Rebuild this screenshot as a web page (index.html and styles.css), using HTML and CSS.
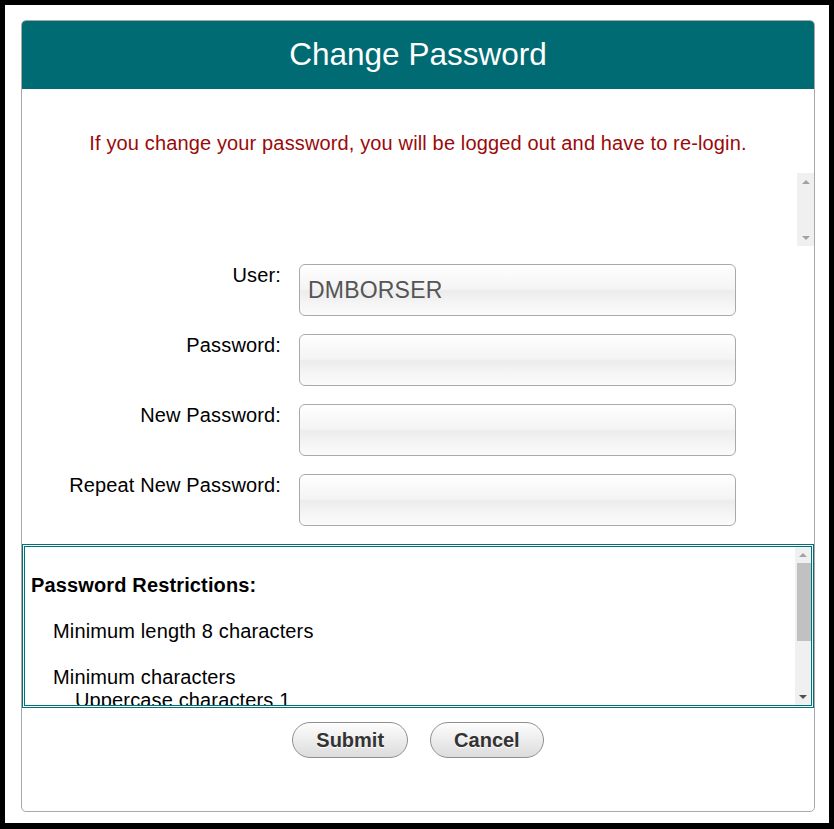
FILE: index.html
```html
<!DOCTYPE html>
<html lang="en">
<head>
<meta charset="utf-8">
<title>Change Password</title>
<link rel="stylesheet" href="styles.css">
</head>
<body>
<div class="frame">
  <div class="dialog">
    <div class="dlg-header"><h1 class="dlg-title">Change Password</h1></div>
    <p class="notice">If you change your password, you will be logged out and have to re-login.</p>
    <div class="msgbox">
      <div class="msgbox-content"></div>
      <div class="vscroll">
        <span class="arrow up"></span>
        <span class="track"></span>
        <span class="arrow down"></span>
      </div>
    </div>
    <form class="pw-form">
      <label class="lbl" for="f-user">User:</label>
      <input class="field" id="f-user" type="text" value="DMBORSER" readonly>
      <label class="lbl" for="f-pw">Password:</label>
      <input class="field" id="f-pw" type="password">
      <label class="lbl" for="f-new">New Password:</label>
      <input class="field" id="f-new" type="password">
      <label class="lbl" for="f-rep">Repeat New Password:</label>
      <input class="field" id="f-rep" type="password">
    </form>
    <div class="restrict">
      <div class="restrict-content">
        <p class="restrict-title">Password Restrictions:</p>
        <p class="restrict-item">Minimum length 8 characters</p>
        <div class="restrict-item">Minimum characters
          <div class="restrict-sub">Uppercase characters 1</div>
        </div>
      </div>
      <div class="vscroll slim">
        <span class="arrow up short"></span>
        <span class="thumb"></span>
        <span class="track"></span>
        <span class="arrow down dark"></span>
      </div>
    </div>
    <div class="actions">
      <button class="btn" type="button">Submit</button>
      <button class="btn" type="button">Cancel</button>
    </div>
  </div>
</div>
</body>
</html>
```

FILE: styles.css
```css
html, body {
  margin: 0;
  background: #000;
}
body {
  padding: 5px 5px 6px;
  font-family: "Liberation Sans", Arial, sans-serif;
  font-size: 20px;
  letter-spacing: 0.14px;
  color: #000;
}
.frame {
  background: #fff;
  width: 824px;
  height: 818px;
  padding: 15px 0 0 16px;
  box-sizing: border-box;
}
.dialog {
  width: 794px;
  height: 792px;
  box-sizing: border-box;
  border: 1px solid #a9a9a9;
  border-radius: 5px;
  display: flex;
  flex-direction: column;
}
.dlg-header {
  height: 68px;
  box-sizing: border-box;
  padding-bottom: 2px;
  background: #016b74;
  border-radius: 4px 4px 0 0;
  display: flex;
  align-items: center;
  justify-content: center;
}
.dlg-title {
  margin: 0;
  font-size: 31.5px;
  font-weight: normal;
  letter-spacing: 0;
  line-height: 37px;
  color: #fff;
}
.notice {
  margin: 43px 0 18px;
  text-align: center;
  color: #9a0a0a;
  line-height: 23px;
}
.msgbox {
  height: 73px;
  display: flex;
  margin-bottom: 18px;
}
.msgbox-content {
  flex: 1;
}
.vscroll {
  width: 17px;
  background: #f0f0f0;
  display: flex;
  flex-direction: column;
}
.vscroll.slim {
  width: 16px;
}
.arrow {
  height: 17px;
  display: flex;
  align-items: center;
  justify-content: center;
  flex: none;
}
.arrow.short {
  height: 16px;
}
.arrow::before {
  content: "";
  width: 0;
  height: 0;
  border-left: 4px solid transparent;
  border-right: 4px solid transparent;
}
.arrow.up::before {
  border-bottom: 4px solid #a3a3a3;
}
.arrow.down::before {
  border-top: 4px solid #a3a3a3;
}
.arrow.down.dark::before {
  border-top-color: #505050;
}
.track {
  flex: 1;
}
.thumb {
  flex: none;
  height: 78px;
  margin-left: 2px;
  background: #c1c1c1;
}
.pw-form {
  display: grid;
  grid-template-columns: 259px 437px;
  column-gap: 18px;
  row-gap: 18px;
  margin: 0 0 18px;
}
.lbl {
  text-align: right;
  line-height: 23px;
}
.field {
  width: 437px;
  height: 52px;
  box-sizing: border-box;
  margin: 0;
  padding: 0 8px;
  border: 1px solid #a9a9a9;
  border-radius: 6px;
  background: linear-gradient(#ffffff 0%, #f4f4f4 48%, #ececec 52%, #f6f6f6 80%, #fbfbfb 100%);
  font-family: "Liberation Sans", Arial, sans-serif;
  font-size: 23px;
  letter-spacing: 0.2px;
  color: #555;
  outline: none;
}
.restrict {
  height: 164px;
  box-sizing: border-box;
  border: 3px double #00717a;
  display: flex;
  margin-bottom: 14px;
}
.restrict-content {
  flex: 1;
  overflow: hidden;
  padding: 27px 0 0 6px;
}
.restrict-title {
  margin: 0 0 23px;
  font-weight: bold;
  line-height: 23px;
}
.restrict-item {
  margin: 0 0 23px 22px;
  line-height: 23px;
}
.restrict-sub {
  margin-left: 22px;
}
.actions {
  display: flex;
  justify-content: center;
  gap: 22px;
}
.btn {
  height: 36px;
  padding: 0 23px;
  border: 1px solid #8f8f8f;
  border-radius: 18px;
  background: linear-gradient(#fdfdfd, #dcdcdc);
  font-family: "Liberation Sans", Arial, sans-serif;
  font-size: 20px;
  font-weight: bold;
  color: #333;
  text-shadow: 0 1px 1px #fff;
  cursor: pointer;
}
```
